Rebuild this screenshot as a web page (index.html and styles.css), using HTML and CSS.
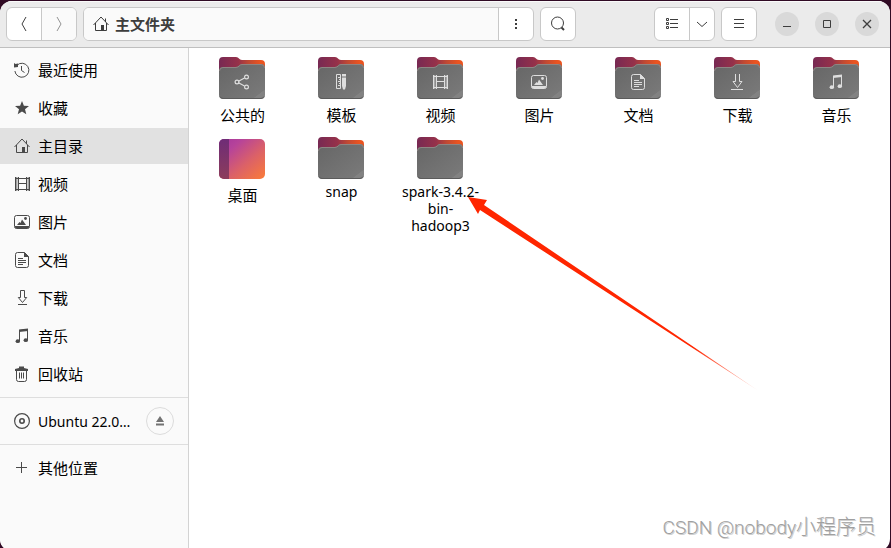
FILE: index.html
```html
<!DOCTYPE html>
<html lang="zh-CN">
<head>
<meta charset="utf-8">
<meta name="viewport" content="width=device-width, initial-scale=1">
<title>主文件夹</title>
<link rel="stylesheet" href="styles.css">
</head>
<body>
<svg class="defs" aria-hidden="true">
  <defs>
    <linearGradient id="tab" x1="0" y1="0" x2="1" y2="0">
      <stop offset="0" stop-color="#772953"/><stop offset=".42" stop-color="#96314a"/><stop offset=".65" stop-color="#c04a33"/><stop offset=".9" stop-color="#ea5420"/><stop offset="1" stop-color="#ea5420"/>
    </linearGradient>
    <linearGradient id="front" x1="0" y1="0" x2="1" y2="1">
      <stop offset="0" stop-color="#666"/><stop offset=".86" stop-color="#787878"/><stop offset=".87" stop-color="#828282"/><stop offset="1" stop-color="#828282"/>
    </linearGradient>
    <linearGradient id="desk" x1="0" y1="0" x2="1" y2="1">
      <stop offset="0" stop-color="#a5359d"/><stop offset=".25" stop-color="#b6439a"/><stop offset=".6" stop-color="#db6168"/><stop offset="1" stop-color="#fb7c38"/>
    </linearGradient>
    <linearGradient id="deskside" x1="0" y1="0" x2="0" y2="1">
      <stop offset="0" stop-color="#6f2c77"/><stop offset="1" stop-color="#8c3d5b"/>
    </linearGradient>
    <linearGradient id="fade" gradientUnits="userSpaceOnUse" x1="225" y1="150" x2="290" y2="193">
      <stop offset="0" stop-color="#ff2600"/><stop offset="1" stop-color="#ff2600" stop-opacity=".2"/>
    </linearGradient>

    <symbol id="folder" viewBox="0 0 47 48">
      <path d="M0 7a4 4 0 0 1 4-4h13c3 0 3 3 6 3h19a4 4 0 0 1 4 4v20H0z" fill="url(#tab)"/>
      <path d="M0 17a4 4 0 0 1 4-4h13c3 0 3-3 6-3h19a4 4 0 0 1 4 4v27a4 4 0 0 1-4 4H4a4 4 0 0 1-4-4z" fill="url(#front)"/>
      <path d="M.5 17A3.500 3.500 0 0 1 4 13.500h13c3.200 0 3.200-3 6-3h19a3.500 3.500 0 0 1 3.500 3.500" fill="none" stroke="#8e8583"/>
      <path d="M1 42.500a3.500 3.500 0 0 0 3 2h38a3.500 3.500 0 0 0 3-2" fill="none" stroke="#5b5b5b"/>
    </symbol>
    <symbol id="i-share" viewBox="0 0 16 16">
      <path d="M4.500 7.200 10.500 4M4.500 8.800l6 3.200" fill="none" stroke="currentColor" stroke-width="1.200"/>
      <g fill="none" stroke="currentColor" stroke-width="1.200"><circle cx="3" cy="8" r="1.900"/><circle cx="12.500" cy="3" r="1.900"/><circle cx="12.500" cy="13" r="1.900"/></g>
    </symbol>
    <symbol id="i-template" viewBox="0 0 16 16">
      <path d="M3.500.500h4v14h-4z" fill="none" stroke="currentColor"/>
      <path d="M5 3.500h2M6 5.500h1M5 7.500h2M6 9.500h1M5 11.500h2" stroke="currentColor"/>
      <path d="M9 0h4v2.500H9zM9 3.500h4V12l-1 3.500h-2L9 12z" fill="currentColor"/>
    </symbol>
    <symbol id="i-video" viewBox="0 0 16 16">
      <path d="M1 1h1v14H1zM15 1h1v14h-1zM4 1h1v14H4zM12 1h1v14h-1zM2 2h13v1H2zM2 13h13v1H2zM5 7h7v1H5z" fill="currentColor"/>
      <path d="M2.500 1.500v13M14.500 1.500v13" stroke="currentColor" stroke-width="2" stroke-dasharray="1 1"/>
    </symbol>
    <symbol id="i-picture" viewBox="0 0 16 16">
      <path d="M.500 3.500a2 2 0 0 1 2-2h11a2 2 0 0 1 2 2v9a2 2 0 0 1-2 2h-11a2 2 0 0 1-2-2z" fill="none" stroke="currentColor"/>
      <path d="M1 12h14v1.500l-1.500 1h-11L1 13.500zM3 11l2.500-3 1 1L8 5.500 12 11z" fill="currentColor"/><circle cx="11.500" cy="4.500" r="1.400" fill="currentColor"/>
    </symbol>
    <symbol id="i-doc" viewBox="0 0 16 16">
      <path d="M10.500.500h-7a2 2 0 0 0-2 2v11a2 2 0 0 0 2 2h9a2 2 0 0 0 2-2V4.500z" fill="none" stroke="currentColor"/>
      <path d="M10 0v5h5zM4 6h5v1H4zM4 8h8v1H4zM4 10h8v1H4zM4 12h5v1H4z" fill="currentColor"/>
    </symbol>
    <symbol id="i-download" viewBox="0 0 16 16">
      <path d="M6.500.500h4v7h2.200l-4.200 5-4.200-5h2.200z" fill="none" stroke="currentColor"/><path d="M4 14.500h9" stroke="currentColor"/>
    </symbol>
    <symbol id="i-download-wide" viewBox="0 0 16 16">
      <path d="M6.500-.500h4v8h2.500l-4.500 6-4.500-6h2.500zM2 15.500h12" fill="none" stroke="currentColor"/>
    </symbol>
    <symbol id="i-music" viewBox="0 0 16 16">
      <path d="M5.500 13V2.500l8-1V12" fill="none" stroke="currentColor"/><path d="M5 1.500 14 .500v2.500L5 4z" fill="currentColor"/>
      <ellipse cx="3.800" cy="13.200" rx="2.200" ry="1.900" fill="currentColor"/><ellipse cx="11.800" cy="12.200" rx="2.200" ry="1.900" fill="currentColor"/>
    </symbol>
    <symbol id="i-recent" viewBox="0 0 16 16">
      <path d="M3 3.200A7 7 0 1 1 .900 9M7.500 4v4.500l3 2" fill="none" stroke="currentColor"/><path d="M0 1l1.500 1L4 1.500V5L0 5.500z" fill="currentColor"/>
    </symbol>
    <symbol id="i-star" viewBox="0 0 16 16"><path d="M8 1l1.900 4.700 5.100.3-4 3.300 1.300 5L8 11.500l-4.300 2.800 1.300-5L1 6l5.100-.3z" fill="currentColor"/></symbol>
    <symbol id="i-home" viewBox="0 0 16 16">
      <path d="M.500 9 8 1l7.500 8M2.500 7v7.500h11V7M12.500 2.500V6" fill="none" stroke="currentColor"/><path d="M8 9h3v5H8z" fill="currentColor"/>
    </symbol>
    <symbol id="i-trash" viewBox="0 0 16 16">
      <path d="M2.500 5v8.500a2 2 0 0 0 2 2h6a2 2 0 0 0 2-2V5M5.500 6.500v6M7.500 6.500v6M9.500 6.500v6" fill="none" stroke="currentColor"/><path d="M1 3l4-1V.500h5V2l4 1v2H1z" fill="currentColor"/>
    </symbol>
    <symbol id="i-disc" viewBox="0 0 16 16"><circle cx="8" cy="8" r="7.400" fill="none" stroke="currentColor" stroke-width="1.200"/><circle cx="8" cy="8" r="2.200" fill="none" stroke="currentColor" stroke-width="1.600"/></symbol>
    <symbol id="i-plus" viewBox="0 0 16 16"><path d="M7.500 2v11M2 7.500h11" fill="none" stroke="currentColor"/></symbol>
    <symbol id="i-eject" viewBox="0 0 16 16"><path d="M8 3l4 6H4zM4 10.500h8v2H4z" fill="currentColor"/></symbol>
    <symbol id="i-back" viewBox="0 0 16 16"><path d="M10 1 6 8l4 7" fill="none" stroke="currentColor"/></symbol>
    <symbol id="i-next" viewBox="0 0 16 16"><path d="M6 1l4 7-4 7" fill="none" stroke="currentColor"/></symbol>
    <symbol id="i-dots" viewBox="0 0 16 16"><path d="M7 3h2v2H7zM7 7h2v2H7zM7 11h2v2H7z" fill="currentColor"/></symbol>
    <symbol id="i-search" viewBox="0 0 16 16"><circle cx="7.500" cy="7" r="6" fill="none" stroke="currentColor"/><path d="M11.500 11.500 14 14" stroke="currentColor" stroke-width="2"/></symbol>
    <symbol id="i-list" viewBox="0 0 16 16"><path d="M2.500 2.500h2v2h-2zM2.500 6.500h2v2h-2zM2.500 10.500h2v2h-2zM6 3.500h8M6 7.500h8M6 11.500h8" fill="none" stroke="currentColor"/></symbol>
    <symbol id="i-down" viewBox="0 0 16 16"><path d="M3 6l5 4.500L13 6" fill="none" stroke="currentColor"/></symbol>
    <symbol id="i-menu" viewBox="0 0 16 16"><path d="M3 3.500h10M3 7.500h10M3 11.500h10" stroke="currentColor"/></symbol>
    <symbol id="i-min" viewBox="0 0 16 16"><path d="M4 10.500h8" stroke="currentColor"/></symbol>
    <symbol id="i-max" viewBox="0 0 16 16"><path d="M4.500 4.500h7v7h-7z" fill="none" stroke="currentColor"/></symbol>
    <symbol id="i-close" viewBox="0 0 16 16"><path d="M4 4l8 8M12 4l-8 8" stroke="currentColor" stroke-width="1.300"/></symbol>
  </defs>
</svg>

<div class="window">
  <header class="header">
    <div class="group">
      <button class="btn" aria-label="后退"><svg class="icon"><use href="#i-back"/></svg></button>
      <button class="btn" aria-label="前进" disabled><svg class="icon"><use href="#i-next"/></svg></button>
    </div>
    <div class="group path">
      <button class="crumb"><svg class="icon"><use href="#i-home"/></svg>主文件夹</button>
      <button class="btn" aria-label="更多"><svg class="icon"><use href="#i-dots"/></svg></button>
    </div>
    <div class="group"><button class="btn" aria-label="搜索"><svg class="icon"><use href="#i-search"/></svg></button></div>
    <div class="group view">
      <button class="btn" aria-label="列表"><svg class="icon"><use href="#i-list"/></svg></button>
      <button class="btn narrow" aria-label="视图选项"><svg class="icon"><use href="#i-down"/></svg></button>
    </div>
    <div class="group"><button class="btn" aria-label="菜单"><svg class="icon"><use href="#i-menu"/></svg></button></div>
    <div class="controls">
      <button aria-label="最小化"><svg class="icon"><use href="#i-min"/></svg></button>
      <button aria-label="最大化"><svg class="icon"><use href="#i-max"/></svg></button>
      <button aria-label="关闭"><svg class="icon"><use href="#i-close"/></svg></button>
    </div>
  </header>

  <div class="body">
    <nav class="sidebar">
      <ul>
        <li><a href="#"><svg class="icon"><use href="#i-recent"/></svg>最近使用</a></li>
        <li><a href="#"><svg class="icon"><use href="#i-star"/></svg>收藏</a></li>
        <li><a href="#" class="active"><svg class="icon"><use href="#i-home"/></svg>主目录</a></li>
        <li><a href="#"><svg class="icon"><use href="#i-video"/></svg>视频</a></li>
        <li><a href="#"><svg class="icon"><use href="#i-picture"/></svg>图片</a></li>
        <li><a href="#"><svg class="icon"><use href="#i-doc"/></svg>文档</a></li>
        <li><a href="#"><svg class="icon"><use href="#i-download"/></svg>下载</a></li>
        <li><a href="#"><svg class="icon"><use href="#i-music"/></svg>音乐</a></li>
        <li><a href="#"><svg class="icon"><use href="#i-trash"/></svg>回收站</a></li>
      </ul>
      <ul>
        <li class="device"><a href="#" class="latin"><svg class="icon"><use href="#i-disc"/></svg>Ubuntu 22.0…</a><button class="eject" aria-label="弹出"><svg class="icon"><use href="#i-eject"/></svg></button></li>
      </ul>
      <ul>
        <li><a href="#"><svg class="icon"><use href="#i-plus"/></svg>其他位置</a></li>
      </ul>
    </nav>

    <main class="files">
      <a class="file" href="#"><span class="pic"><svg><use href="#folder"/></svg><svg class="emblem"><use href="#i-share"/></svg></span><span class="name">公共的</span></a>
      <a class="file" href="#"><span class="pic"><svg><use href="#folder"/></svg><svg class="emblem"><use href="#i-template"/></svg></span><span class="name">模板</span></a>
      <a class="file" href="#"><span class="pic"><svg><use href="#folder"/></svg><svg class="emblem"><use href="#i-video"/></svg></span><span class="name">视频</span></a>
      <a class="file" href="#"><span class="pic"><svg><use href="#folder"/></svg><svg class="emblem"><use href="#i-picture"/></svg></span><span class="name">图片</span></a>
      <a class="file" href="#"><span class="pic"><svg><use href="#folder"/></svg><svg class="emblem"><use href="#i-doc"/></svg></span><span class="name">文档</span></a>
      <a class="file" href="#"><span class="pic"><svg><use href="#folder"/></svg><svg class="emblem"><use href="#i-download-wide"/></svg></span><span class="name">下载</span></a>
      <a class="file" href="#"><span class="pic"><svg><use href="#folder"/></svg><svg class="emblem"><use href="#i-music"/></svg></span><span class="name">音乐</span></a>
      <a class="file" href="#"><span class="pic"><svg viewBox="0 0 47 48"><rect y="5" width="46" height="40" rx="5" fill="url(#desk)"/><path d="M10 5H5a5 5 0 0 0-5 5v30a5 5 0 0 0 5 5h5z" fill="url(#deskside)"/></svg></span><span class="name">桌面</span></a>
      <a class="file" href="#"><span class="pic"><svg><use href="#folder"/></svg></span><span class="name latin">snap</span></a>
      <a class="file" href="#"><span class="pic"><svg><use href="#folder"/></svg></span><span class="name latin">spark-3.4.2-<br>bin-<br>hadoop3</span></a>
      <svg class="arrow" viewBox="0 0 290 194" aria-hidden="true"><path d="M0 0l19 3-3 5L290 193.500 12 13l-2 4z" fill="url(#fade)"/></svg>
      <p class="watermark"><span>CSDN @nobody</span>小程序员</p>
    </main>
  </div>
</div>
</body>
</html>
```
FILE: styles.css
```css
* { box-sizing: border-box; }
body {
  margin: 0;
  height: 100vh;
  overflow: hidden;
  padding: 1px 1px 0 0;
  background: #300a24;
  color: #000;
  font: 15px/24px "Noto Sans CJK SC", sans-serif;
}
button { font: inherit; color: inherit; border: 0; padding: 0; background: none; }
a { color: inherit; text-decoration: none; }
ul { list-style: none; margin: 0; padding: 0; }
.defs { position: absolute; width: 0; height: 0; }
.icon { width: 16px; height: 16px; flex: none; display: block; }

.window {
  height: calc(100vh + 2px);
  display: flex;
  flex-direction: column;
  border-radius: 12px;
  overflow: hidden;
  background: #fff;
}
.header {
  display: flex;
  align-items: center;
  gap: 6px;
  height: 47px;
  flex: none;
  padding: 0 11px 0 6px;
  background: #ebebeb;
  border-bottom: 1px solid #bfbfbf;
  box-shadow: inset 0 1px #fafafa;
  color: #3d3d3d;
}
.group {
  display: flex;
  height: 34px;
  border: 1px solid #c8c8c8;
  border-radius: 6px;
  background: #fff;
  overflow: hidden;
}
.btn { width: 34px; display: grid; place-items: center; }
.btn + .btn, .crumb + .btn { width: 35px; border-left: 1px solid #c8c8c8; }
.btn + .narrow { width: 25px; }
.btn:disabled { background: #fafafa; color: #929292; }
.path { flex: 0 1 451px; }
.crumb {
  flex: 1;
  display: flex;
  align-items: center;
  gap: 6px;
  padding: 0 9px;
  background: #fafafa;
  font-weight: 700;
}
.view { margin-left: auto; }
.controls { display: flex; gap: 16px; margin-left: 12px; }
.controls button {
  width: 24px;
  height: 24px;
  border-radius: 50%;
  background: #d9d9d9;
  display: grid;
  place-items: center;
}

.body { flex: 1; display: flex; min-height: 0; }
.sidebar {
  width: 189px;
  flex: none;
  padding-top: 4px;
  background: #fafafa;
  border-right: 1px solid #d3d3d3;
}
.sidebar ul { display: grid; gap: 2px; }
.sidebar ul + ul { margin-top: 5px; padding-top: 5px; border-top: 1px solid #dedede; }
.sidebar li { display: flex; align-items: center; }
.sidebar a {
  flex: 1;
  display: flex;
  align-items: center;
  gap: 8px;
  height: 36px;
  padding-left: 14px;
  white-space: nowrap;
}
.sidebar .icon { color: #4a4a4a; }
.sidebar .active { background: #e1e1e1; }
.device { padding-right: 14px; }
.eject {
  width: 28px;
  height: 28px;
  border: 1px solid #dcdcdc;
  border-radius: 50%;
  display: grid;
  place-items: center;
}
.sidebar .eject .icon { color: #727272; }
.latin { font-family: "Noto Sans", sans-serif; font-size: 14px; line-height: 17px; }

.files {
  position: relative;
  flex: 1;
  display: grid;
  grid-template-columns: repeat(7, 1fr);
  align-content: start;
  gap: 6px 0;
  padding: 6px 4px;
}
.file {
  display: flex;
  flex-direction: column;
  align-items: center;
  gap: 1px;
  height: 74px;
  text-align: center;
}
.pic { display: grid; flex: none; width: 47px; height: 48px; }
.pic > svg { grid-area: 1 / 1; width: 47px; height: 48px; }
.pic > .emblem { width: 16px; height: 16px; margin: 20px 0 0 15px; color: #dedede; overflow: visible; }
.name { white-space: nowrap; }

.arrow { position: absolute; left: 279px; top: 149px; width: 290px; height: 194px; }
.watermark {
  position: absolute;
  right: 14px;
  bottom: 9px;
  margin: 0;
  font: 300 20px/28px Roboto, "Noto Sans CJK SC", sans-serif;
  color: #a0a0a0;
  text-shadow: 1px 1px #d0d0d0;
}
.watermark span { font-size: 19px; }
```
